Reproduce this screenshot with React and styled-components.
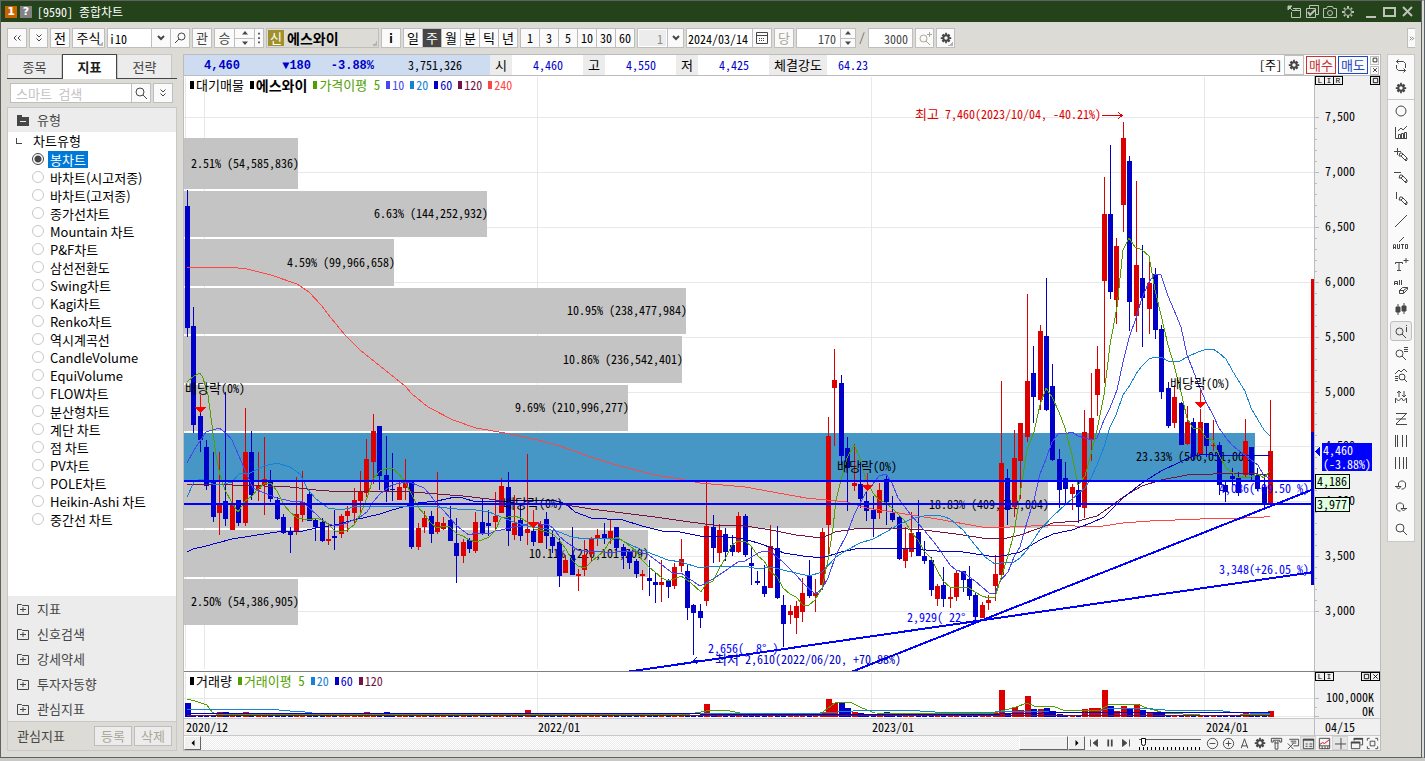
import React, { Component } from 'react';
import styled, { createGlobalStyle, css } from 'styled-components';

const cellFont = '"Noto Sans Mono CJK KR", "Noto Sans CJK KR", "Liberation Mono", monospace';
const treeFont = '"Noto Sans CJK KR", sans-serif';

const RED = '#dc0000';
const BLUE = '#0000c8';
const LINE = '#0000ff';
const GREEN = '#50a000';
const VIOLET = '#4646f5';
const SKY = '#1482d7';
const WINE = '#731446';
const CORAL = '#ff4646';

const GlobalStyle = createGlobalStyle`
  * { box-sizing: border-box; }
  body {
    margin: 0;
    background: #c8c8c6;
    font: 12px/16px ${cellFont};
    color: #000;
    overflow: hidden;
  }
  button, input, select { font: inherit; margin: 0; border-radius: 0; }
  button { cursor: pointer; }
  button svg { flex: none; }
`;

const Screen = styled.div`
  height: 100vh;
  min-height: 620px;
  padding-bottom: 3px;
`;

const Frame = styled.div`
  display: flex;
  flex-direction: column;
  height: 100%;
  border: 1px solid #5f625f;
  border-right: 4px double #5a6068;
  background: #dcdbd5;
`;

const TitleBar = styled.header`
  display: flex;
  align-items: center;
  flex: 0 0 21px;
  gap: 5px;
  padding: 0 5px 0 4px;
  background: #24431b;
  color: #fff;
`;

const TitleBadges = styled.div`
  display: flex;
  gap: 3px;
`;

const TitleBadge = styled.span`
  width: 12px;
  height: 12px;
  background: ${p => p.$color};
  font: bold 11px/12px "DejaVu Sans", sans-serif;
  text-align: center;
`;

const TitleText = styled.h1`
  flex: 1;
  margin: 0;
  font-size: 12px;
  font-weight: normal;
`;

const TitleTools = styled.div`
  display: flex;
`;

const TitleButton = styled.button`
  display: flex;
  align-items: center;
  justify-content: center;
  width: 18px;
  height: 18px;
  padding: 0;
  border: 0;
  background: none;
  color: #bcc4b8;
`;

const Toolbar = styled.div`
  display: flex;
  flex: 0 0 32px;
  gap: 2px;
  padding: 6px 6px 6px;
`;

const Group = styled.div`
  display: flex;
  height: 20px;
  & > * + * { margin-left: -1px; }
`;

const ToolButton = styled.button`
  display: flex;
  align-items: center;
  justify-content: center;
  flex: 0 0 ${p => p.$w || 20}px;
  min-width: 0;
  height: 20px;
  padding: 0;
  border: 1px solid #bebebe;
  background: ${p => (p.$on ? '#464646' : '#fafafa')};
  color: ${p => (p.$on ? '#fff' : p.$dim ? '#aaa696' : p.$soft ? '#464646' : '#000')};
  font-size: ${p => (p.$ko ? 13 : 12)}px;
  ${p => p.$corner && css`
    background: linear-gradient(135deg, transparent 50%, #b4b4b4 50%) right 1px bottom 1px / 5px 5px no-repeat #fafafa;
  `}
`;

const StockButton = styled(ToolButton)`
  justify-content: flex-start;
  gap: 3px;
  padding-left: 1px;
  background-color: #dcdbd5;
  font-weight: bold;
  font-size: 14px;
`;

const StockBadge = styled.span`
  width: 16px;
  line-height: 16px;
  background: #a0912d;
  color: #fff;
  font-size: 13px;
  font-weight: normal;
  text-align: center;
`;

const Field = styled.input`
  width: ${p => p.$w}px;
  height: 20px;
  padding: 0 ${p => (p.$right ? 4 : 1)}px;
  border: 1px solid #bebebe;
  background: ${p => (p.$gray ? '#ececec' : '#fff')};
  box-shadow: ${p => (p.$gray ? 'inset 0 0 0 1px #fff' : 'none')};
  color: ${p => (p.$gray ? '#8c8c8c' : p.$soft ? '#464646' : '#000')};
  text-align: ${p => (p.$right ? 'right' : 'left')};
  outline: none;
`;

const Spinner = styled.div`
  display: flex;
  flex-direction: column;
  flex: none;
  width: ${p => p.$w}px;
  height: 20px;
  border: 1px solid #bebebe;
  background: #fafafa;
`;

const SpinButton = styled.button`
  flex: 1;
  display: flex;
  align-items: center;
  justify-content: center;
  min-height: 0;
  padding: 0;
  border: 0;
  background: none;
  color: #464646;
  & + & { border-top: 1px solid #bebebe; }
`;

const Slash = styled.span`
  width: 8px;
  line-height: 18px;
  text-align: center;
  color: #666;
`;

const EdgeButton = styled(ToolButton)`
  margin-left: auto;
  border-right: 0;
`;

const Main = styled.div`
  display: flex;
  flex: 1;
  gap: 6px;
  min-height: 0;
  padding: 0 6px 6px;
`;

const Sidebar = styled.aside`
  display: flex;
  flex-direction: column;
  flex: 0 0 170px;
  color: #464646;
  font-size: 13px;
`;

const Tabs = styled.div`
  display: flex;
  height: 25px;
  padding-right: 5px;
  border-bottom: 1px solid #464646;
`;

const Tab = styled.button`
  flex: 1;
  height: ${p => (p.$active ? 25 : 24)}px;
  padding: 0;
  border: 1px solid ${p => (p.$active ? '#464646' : '#c8c8c8')};
  border-bottom: 0;
  background: ${p => (p.$active ? '#fff' : '#ececec')};
  color: ${p => (p.$active ? '#1e1e1e' : '#464646')};
  font-weight: ${p => (p.$active ? 'bold' : 'normal')};
`;

const SearchRow = styled.div`
  display: flex;
  gap: 2px;
  padding: 4px 3px;
  & input { padding-left: 5px; }
  & input::placeholder { color: #c3c3c3; opacity: 1; }
`;

const Panel = styled.div`
  display: flex;
  flex-direction: column;
  flex: 1;
  min-height: 0;
  border: 1px solid #c8c8c8;
  background: #fff;
`;

const GroupHeader = styled.button`
  display: flex;
  align-items: center;
  gap: 6px;
  flex: 0 0 ${p => p.$h}px;
  width: 100%;
  padding: 0 7px;
  border: 0;
  background: #ececec;
  color: #464646;
`;

const Tree = styled.div`
  flex: 1;
  min-height: 0;
  overflow: hidden;
  font: 13px/18px ${treeFont};
  color: #000;
`;

const TreeRoot = styled.div`
  display: flex;
  align-items: center;
  gap: 11px;
  height: 18px;
  padding-left: 8px;
  &::before {
    content: '';
    width: 5px;
    height: 5px;
    border: 1px solid #464646;
    border-width: 0 0 1px 1px;
  }
`;

const TreeItem = styled.label`
  display: flex;
  align-items: center;
  gap: 4px;
  height: 18px;
  padding-left: 24px;
  & span {
    padding: 0 2px;
    line-height: 17px;
  }
  & input:checked + span {
    background: #0078d7;
    color: #fff;
  }
`;

const Radio = styled.input`
  appearance: none;
  width: 12px;
  height: 12px;
  border: 1px solid #c8c8c8;
  border-radius: 50%;
  background: #fff;
  &:checked {
    border-color: #464646;
    background: radial-gradient(circle, #464646 3px, #fff 4px);
  }
`;

const SideFooter = styled.div`
  display: flex;
  align-items: center;
  gap: 2px;
  flex: 0 0 29px;
  padding: 0 4px 0 9px;
  border-top: 1px solid #c8c8c8;
  background: #dcdbd5;
  & > span { flex: 1; }
`;

const SideButton = styled(ToolButton)`
  background: #ececec;
`;

const ChartPanel = styled.main`
  display: flex;
  flex-direction: column;
  flex: 1;
  min-width: 0;
  border: 1px solid #bcbcbe;
  background: #fff;
`;

const QuoteBar = styled.div`
  display: flex;
  align-items: center;
  flex: 0 0 21px;
  padding-right: 1px;
  border-bottom: 1px solid #bcbcbe;
  line-height: 20px;
`;

const QuoteMain = styled.div`
  display: flex;
  flex: 0 0 306px;
  height: 20px;
  background: #cddcf0;
`;

const Quote = styled.span`
  flex: 0 0 ${p => p.$w}px;
  padding-right: ${p => p.$pad || 0}px;
  color: ${p => (p.$plain ? '#000' : BLUE)};
  text-align: right;
  ${p => p.$bold && css`font: bold 12px/22px "Liberation Mono", "Noto Sans CJK KR", monospace;`}
`;

const QuoteLabel = styled.span`
  flex: 0 0 ${p => p.$w || 22}px;
  background: #ececec;
  font-size: 13px;
  text-align: center;
`;

const QuoteTools = styled.div`
  display: flex;
  align-items: center;
  gap: 2px;
  margin-left: auto;
`;

const TradeButton = styled.button`
  width: 30px;
  height: 18px;
  padding: 0;
  border: 1px solid ${p => p.$color};
  background: #fafafa;
  color: ${p => p.$color};
  font-size: 13px;
  line-height: 14px;
`;

const MiniStack = styled.div`
  display: flex;
  flex-direction: column;
  gap: 1px;
`;

const MiniButton = styled.button`
  display: flex;
  align-items: center;
  justify-content: center;
  width: ${p => (p.$dark ? 10 : 9)}px;
  height: 9px;
  padding: 0;
  border: 1px solid ${p => (p.$dark ? '#000' : '#bebebe')};
  background: ${p => (p.$dark ? 'none' : '#fafafa')};
  color: #000;
  font: 8px/8px "Liberation Mono", monospace;
`;

const ChartRow = styled.div`
  display: flex;
  position: relative;
  min-height: 0;
  flex: ${p => (p.$h ? `0 0 ${p.$h}px` : '1')};
  border-top: ${p => (p.$h ? '1px solid #808080' : '0')};
`;

const Plot = styled.svg`
  display: block;
  flex: 1;
  min-width: 0;
  height: 100%;
  font: 12px ${cellFont};
`;

const Axis = styled.div`
  position: relative;
  flex: 0 0 66px;
  border-left: 1px solid #bcbcbe;
  background: #f0f0f0;
  & > svg {
    display: block;
    width: 100%;
    height: 100%;
    font: 12px ${cellFont};
  }
`;

const AxisTools = styled.div`
  position: absolute;
  top: 0;
  left: 0;
  right: 0;
  display: flex;
  & > button + button { margin-left: -1px; }
`;

const Push = styled.span`
  flex: 1;
`;

const Legend = styled.div`
  position: absolute;
  top: 1px;
  left: 6px;
  display: flex;
  gap: 6px;
`;

const LegendItem = styled.span`
  display: flex;
  align-items: center;
  gap: 2px;
  color: ${p => p.$color};
  font-weight: ${p => (p.$bold ? 'bold' : 'normal')};
  font-size: ${p => (p.$bold ? 14 : p.$ko ? 13 : 12)}px;
  white-space: pre;
  &::before {
    content: '';
    width: 4px;
    height: 8px;
    background: ${p => p.$color};
  }
`;

const DateRow = styled.div`
  display: flex;
  flex: 0 0 17px;
  border-top: 1px solid #c8c8c8;
  background: #f0f0f0;
`;

const Dates = styled.div`
  display: grid;
  grid-template-columns: 352fr 334fr 334fr 108fr;
  flex: 1;
  padding-left: 2px;
`;

const DateCorner = styled.div`
  flex: 0 0 66px;
  padding-left: 10px;
  border-left: 1px solid #bcbcbe;
`;

const ControlRow = styled.div`
  display: flex;
  flex: 0 0 15px;
  border-top: 1px solid #c8c8c8;
  background: #f5f5f5;
`;

const ScrollTrack = styled.div`
  display: flex;
  flex: 1;
  height: 14px;
  background: repeating-conic-gradient(#ececec 0 25%, #fff 0 50%) 0 0 / 2px 2px;
`;

const ScrollPiece = styled.button`
  display: flex;
  align-items: center;
  justify-content: center;
  width: ${p => p.$w}px;
  height: 14px;
  padding: 0;
  border: 1px solid;
  border-color: #fff #646464 #646464 #fff;
  background: #f0f0f0;
  color: #000;
`;

const ControlTools = styled.div`
  display: flex;
  align-items: center;
  flex: 0 0 295px;
  height: 14px;
  padding-left: 1px;
`;

const ControlButton = styled.button`
  display: flex;
  align-items: center;
  justify-content: center;
  flex: 0 0 16px;
  height: 14px;
  padding: 0;
  border: 0;
  background: ${p => (p.$on ? '#e6e6e6' : 'none')};
  box-shadow: ${p => (p.$on ? 'inset 0 0 0 1px #d2d2d2' : 'none')};
  color: #464646;
`;

const ZoomSlider = styled.input`
  appearance: none;
  flex: none;
  width: 62px;
  height: 14px;
  &[type] { margin: 0 3px 0 5px; }
  background:
    linear-gradient(#646464, #646464) 0 3px / 62px 1px no-repeat,
    repeating-linear-gradient(90deg, #000 0 1px, transparent 1px 4px) 0 11px / 62px 3px no-repeat;
  &::-webkit-slider-thumb {
    appearance: none;
    width: 5px;
    height: 8px;
    margin-top: -3px;
    border: 1px solid #000;
    border-radius: 0 0 3px 3px;
    background: #fff;
  }
`;

const ToolStrip = styled.nav`
  align-self: flex-start;
  flex: 0 0 28px;
  padding: 1px 0 0;
  border: 1px solid #c8c8c8;
  background: #fafafa;
`;

const StripButton = styled.button`
  display: flex;
  align-items: center;
  justify-content: center;
  width: 22px;
  height: 20px;
  padding: 0;
  border: 1px solid ${p => (p.$on ? '#bebebe' : 'transparent')};
  border-radius: 3px;
  background: ${p => (p.$on ? '#ececec' : 'none')};
  color: #464646;
  ${ToolStrip} & { margin: 0 2px 2px; }
`;

const StripRule = styled.hr`
  height: 1px;
  margin: -1px 0 1px;
  border: 0;
  background: #c8c8c8;
`;

const gearPath = 'M7 2h2v2h1l1-1 2 2-1 1v1h2v2h-2v1l1 1-2 2-1-1H9v2H7v-2H6l-1 1-2-2 1-1V9H2V7h2V6L3 5l2-2 1 1h1z';

const pencil = <path d="M7 6l2 0 5 5v2l-1 1-5-5-2 0zM8 9l2-2M12 13l2-2" />;
const lens = <><circle cx="6.5" cy="8.5" r="3.5" /><path d="M9 11l4 4" /></>;

const shapes = {
  dblLeft: <path d="M7.5 5.5L5 8l2.5 2.5M11.500 5.500L9 8l2.500 2.500" />,
  dblRight: <path d="M4 4l4 4-4 4M9 4l4 4-4 4" />,
  dblDown: <path d="M5.500 4.500L8 7l2.500-2.500M5.500 8.500L8 11l2.500-2.500" />,
  chevron: <path d="M5 6l3 3 3-3" strokeWidth="2" />,
  up: <path d="M2 11h12L8 4z" fill="currentColor" stroke="none" />,
  down: <path d="M2 5h12l-6 7z" fill="currentColor" stroke="none" />,
  left: <path d="M10 4v8L6 8z" fill="currentColor" stroke="none" />,
  right: <path d="M6 4v8l4-4z" fill="currentColor" stroke="none" />,
  dots: <path d="M7 2h2v2H7zM7 7h2v2H7zM7 12h2v2H7z" fill="currentColor" stroke="none" />,
  findLeft: <><circle cx="9.5" cy="6.5" r="3.5" /><path d="M7 9l-4 4" /></>,
  find: <><circle cx="7" cy="7" r="4" /><path d="M10 10l4 4" /></>,
  findPlus: <>{lens}<path d="M12.5 2v5M10 4.5h5" /></>,
  findInfo: <>{lens}<path d="M13.5 2v1M13.5 4v5" /></>,
  findList: <>{lens}<path d="M11 2.5h4M11 4.500h4M11 6.500h4" /></>,
  findChart: <><path d="M2 7l4-4 2 2 3-3 3 3M2 9.500h3M2 11.500h3M2 13.500h3" /><circle cx="9" cy="10" r="3" /><path d="M11 12l3 3" /></>,
  calendar: <><path d="M2.500 2.500h11v11h-11zM3 5.500h10" /><path d="M5 8.500h6M5 10.500h6" strokeDasharray="1 1" /></>,
  gear: <><path d={gearPath} fill="currentColor" stroke="none" /><circle cx="8" cy="8" r="2" fill="#fafafa" stroke="none" /></>,
  gearLine: <><circle cx="8" cy="8" r="3.5" /><path d="M8 2v2M8 12v2M2 8h2M12 8h2M4 4l1 1M11 11l1 1M12 4l-1 1M5 11l-1 1" strokeWidth="2" /></>,
  popOut: <><path d="M7 4.500h7.500v9h-9V8M6 6.500h8M10 5v2" /><path d="M2 2h4L2 6zM3 3l4 4" fill="currentColor" /></>,
  windows: <><path d="M5.500 4V1.500h9v9H12M2.500 4.500h9v9h-9z" /><path d="M4 8l2 3 5-5" strokeWidth="2" /></>,
  camera: <><path d="M1.500 4.500h3l1-2h5l1 2h3v9h-13z" /><circle cx="8" cy="9" r="2.5" /></>,
  minimize: <path d="M3 13h10" strokeWidth="2" />,
  maximize: <path d="M3 4h11v8H3z" strokeWidth="2" />,
  close: <path d="M4 3l9 9M13 3l-9 9" strokeWidth="2" />,
  folder: <path d="M2 3h5v2h7v9H2z M5 9h6v1H5z" fill="currentColor" stroke="none" fillRule="evenodd" />,
  folderPlus: <path d="M2.500 3.500h4l1 1h6v9h-11zM5 8.500h6M8 6v5" />,
  refresh: <path d="M5.500 1.500l-2 2 2 2M3.500 3.500h7l2 2V10M10.500 14.500l2-2-2-2M12.500 12.500h-7l-2-2V7" />,
  circle: <circle cx="8" cy="8" r="5" />,
  chartBars: <path d="M2.500 2v11.500H14M5 6l3-3 2 2 4-4M5.500 13V9.500h2V13M8.500 13V8.500h2V13M11.500 13V7.500h2V13" />,
  crossPencil: <>{pencil}<path d="M1 4.500h7M4.500 1v7" /></>,
  dashPencil: <>{pencil}<path d="M1 3.500h7" /></>,
  barPencil: <>{pencil}<path d="M3.500 1v7" /></>,
  slash: <path d="M2 14L14 2" />,
  autoLine: <><path d="M6 7l5-5" /><path d="M.5 14v-4l1-1 1 1v4M1 12.500h2M4.500 9v4.500h2V9M8 9.500h3M9.500 9v5M12.500 9.500h2v4h-2z" /></>,
  textPlus: <path d="M2.500 7V5.500h7V7M6 5v8.500M4 13.500h4M13 1v5M10.500 3.500h5" />,
  allErase: <path d="M1.500 6V2.500h3V6M2 4.500h3M6.500 1v5M8.500 1v5M6.500 11.500l3-3h5v2l-4 4h-4zM6 11.500h4.500l4-3M10.500 11v3" />,
  candles: <><path d="M5 3v11M11 2v11" /><path d="M3 6h4v5H3zM9 5h4v5H9z" fill="currentColor" /></>,
  waveArrows: <path d="M2.500 14V9l3 3 3-3 2 3 3-3v5M6 8V2M4 4l2-2 2 2M11 2v6M9 6l2 2 2-2" />,
  zigzag: <path d="M3 2.500h11M13 3L3 13M3 8h10M3 13.500h11" />,
  bars5: <path d="M2.500 2v12M4.500 2v12M9.500 2v12M13.500 2v12" />,
  bars4: <path d="M2.500 2v12M6.500 2v12M10.500 2v12M13.500 2v12" />,
  turnLeft: <path d="M5.500 10V6l2-2h3l2 2v4l-2 2h-2M2 9.500h6M5.500 12L3 9.500h5z" />,
  turnRight: <path d="M10.500 10V6l-2-2h-3l-2 2v4l2 2h2M8 9.500h6M10.500 12L8 9.500h5z" />,
  first: <><path d="M4 4v8" /><path d="M12 4v8L7 8z" fill="currentColor" /></>,
  pause: <path d="M6 4v8M10 4v8" strokeWidth="2" />,
  last: <><path d="M12 4v8" /><path d="M4 4v8l5-4z" fill="currentColor" /></>,
  minus: <><circle cx="8" cy="8" r="5.5" /><path d="M5 8h6" /></>,
  plus: <><circle cx="8" cy="8" r="5.5" /><path d="M5 8h6M8 5v6" /></>,
  letter: <path d="M4.500 13L8 3l3.500 10M5 10.500h6" />,
  funnel: <path d="M2.500 2.500h11v4h-2v-2h-7v2h-2zM6 7.500h4M6.500 5v9h3V5" />,
  flagX: <path d="M4.500 3.500h10v7H9M6 5.500h6M7 7.500h5M3 8l6 6M9 8l-6 6" />,
  tableGrid: <><path d="M2.500 3.500h11v10h-11zM5 8.500h2M9 8.500h3M5 11h2M9 11h3" /><path d="M2 4h12" strokeWidth="2" /></>,
  chartRed: <><path d="M2.500 2.500h11v11h-11zM2 10.500h12M5.500 11v3M8.500 11v3M11.500 11v3" /><path d="M3 9l3-2 2 1 5-4" stroke={RED} /></>,
  cross: <path d="M2 8.500h12M8.500 2v12" />,
  layers: <><path d="M5.500 5V2.500h9v7H12M2.500 6.500h9v7h-9z" /><path d="M2 7h10M5 3h10" strokeWidth="2" /></>,
  expand: <path d="M2.500 5V2.500H5M11 2.500h2.500V5M13.500 11v2.500H11M5 13.500H2.500V11M5.500 5.500h5v5h-5z" />,
  square: <path d="M3 3h10v10H3z" strokeWidth="2" />,
  x: <path d="M3 3l10 10M13 3L3 13" strokeWidth="2" />,
};

const Icon = ({ name, size = 16 }) => (
  <svg width={size} height={size} viewBox="0 0 16 16" fill="none" stroke="currentColor" aria-hidden="true">
    {shapes[name]}
  </svg>
);

// one row per week: direction, high, body top, body bottom, low
const candles = `b 190 206 328 337|b 307 326 425 433|b 413 416 440 452|b 440 447 486 490|b 452 482 517 522|r 452 505 513 535
b 392 501 519 526|r 482 505 530 530|b 500 500 523 526|r 408 452 523 526|b 431 452 495 500|r 452 486 489 501|r 437 479 485 515
b 470 482 499 502|b 497 500 519 520|b 514 517 533 534|b 527 531 535 553|r 477 514 532 535|r 471 502 515 522|b 490 494 521 521
b 518 520 527 541|b 518 522 541 542|r 523 539 541 545|b 510 536 538 550|r 514 516 534 538|r 506 511 516 532|r 488 500 513 524
r 471 492 501 515|r 439 459 493 497|r 414 431 462 484|b 426 426 476 490|b 436 475 491 502|b 453 489 490 501|r 482 487 500 500
r 459 482 488 500|b 481 481 547 549|r 523 528 547 550|r 511 518 527 533|b 511 516 534 543|r 472 522 532 534|r 517 523 529 530
b 506 520 541 541|b 518 543 556 583|r 539 542 556 563|b 538 540 549 553|r 512 522 551 553|b 499 522 534 535|b 510 523 526 536
r 492 516 522 531|r 478 486 513 513|b 472 487 531 546|r 495 523 535 540|b 505 520 536 541|r 454 529 533 545|b 527 531 542 546
r 521 524 543 543|b 512 519 536 549|b 531 537 546 553|b 538 542 576 587|r 555 560 573 573|b 527 555 575 575|r 569 574 576 591
r 540 555 570 576|r 537 539 554 561|r 529 535 539 546|b 523 534 538 544|r 520 531 538 544|b 527 527 548 552|b 544 547 556 569
b 549 551 563 569|b 559 561 574 578|r 570 574 576 590|b 560 578 581 596|b 573 582 585 603|r 560 582 585 602|b 579 581 587 598
r 563 567 586 589|r 539 559 566 572|b 565 571 608 620|b 604 605 613 655|b 604 611 618 628|r 482 526 601 606|b 515 527 548 563
r 524 530 553 562|b 528 534 552 561|b 535 545 552 556|r 512 516 552 553|b 514 516 555 557|b 546 563 566 585|b 571 581 583 585
b 565 586 594 597|r 525 546 588 588|b 526 548 598 599|b 595 605 624 647|r 605 611 615 624|r 601 606 618 634|r 578 593 612 622
b 560 576 596 598|r 579 593 596 612|r 528 532 585 590|r 417 436 525 555|r 349 380 388 446|b 375 383 456 465|b 437 448 468 511
r 444 483 486 491|b 458 484 499 508|b 492 501 511 521|b 496 510 519 537|r 483 490 513 519|b 474 479 502 525|b 496 513 520 522
b 515 517 559 560|r 527 548 561 568|r 512 533 552 557|b 500 532 556 556|b 541 556 561 564|b 557 560 590 596|r 584 586 599 606
b 567 585 599 607|r 587 597 599 608|r 570 573 597 601|b 571 571 580 592|b 566 579 596 600|b 593 595 617 620|r 602 605 618 618
r 595 600 603 610|r 555 574 586 601|r 381 463 575 580|b 469 478 510 525|r 430 458 507 517|r 423 423 461 499|r 294 381 437 442
b 346 373 397 423|r 325 331 400 410|b 278 336 410 411|b 364 386 460 461|b 449 459 490 508|b 462 478 489 505|r 484 487 494 510
b 482 490 507 523|r 410 432 508 518|r 373 418 440 461|r 346 369 395 416|r 177 214 281 383|b 145 214 292 299|r 238 246 300 324
r 122 138 205 232|b 156 161 302 331|r 181 265 316 332|b 245 278 298 347|r 261 283 309 334|b 268 274 330 339|b 325 329 392 399
b 382 388 426 428|r 385 397 423 428|b 402 403 445 445|r 406 422 444 445|b 418 422 456 461|r 409 422 454 454|b 423 423 446 457
r 420 445 446 451|b 442 445 485 495|b 480 485 492 502|b 468 476 479 485|b 472 478 493 496|r 419 441 475 477|b 447 447 475 480
b 468 475 489 491|b 475 487 505 508|r 400 451 504 504`
  .split(/[|\n]/)
  .map((row, i) => {
    const [dir, ...v] = row.split(' ');
    const [high, top, bottom, low] = v.map(Number);
    return { x: Math.round(187 + i * 6.41), color: dir === 'r' ? RED : BLUE, high, top, bottom, low };
  });

// bar heights of the busy weeks, every other week is nearly flat
const volumes = {
  0: 14, 5: 5, 6: 5, 9: 5, 28: 5, 31: 5, 53: 7, 81: 13, 82: 4, 86: 4, 99: 5, 100: 18, 101: 14, 102: 14, 103: 9, 104: 5,
  105: 4, 108: 4, 109: 5, 126: 4, 127: 27, 128: 4, 129: 10, 130: 7, 131: 21, 132: 8, 133: 8, 134: 9, 135: 6, 136: 3, 140: 8,
  141: 9, 142: 9, 143: 27, 144: 11, 145: 6, 146: 11, 147: 8, 148: 13, 149: 7, 150: 4, 151: 4, 152: 4, 165: 4, 169: 6,
};

const averages = [
  [CORAL, '187,267 229,267 247,269 271,275 297,284 309,292 322,306 331,318 345,335 360,350 375,362 390,374 405,386 412,394 428,407 453,420 476,428 505,433 534,439 560,446 585,455 616,465 655,475 680,479 700,483 745,487 806,498 847,502 867,508 886,511 937,519 982,527 1010,527 1053,525 1097,527 1123,523 1150,521 1200,519 1245,518 1264,517 1270,516'],
  [WINE, '187,485 206,484 232,485 264,486 290,487 316,490 341,492 367,491 412,492 437,494 463,496 489,499 514,503 540,503 566,505 591,509 623,513 655,517 690,522 713,525 745,526 771,530 796,535 822,538 835,532 854,529 892,528 924,530 956,534 989,539 1007,538 1020,535 1040,528 1053,523 1078,521 1097,516 1110,507 1123,497 1142,486 1161,480 1187,475 1213,474 1238,473 1258,474 1270,474'],
  [BLUE, '187,552 193,549 206,546 232,539 251,536 277,532 303,531 316,528 335,525 354,520 380,514 392,510 418,503 437,501 455,497 463,498 476,502 489,501 508,501 527,500 553,500 566,504 575,512 591,518 623,520 642,526 662,531 680,532 700,536 726,537 745,539 764,545 784,553 803,556 822,558 841,552 860,548 905,548 937,551 963,552 989,556 995,557 1007,555 1020,552 1040,540 1053,534 1072,530 1091,523 1104,517 1123,498 1142,483 1161,471 1180,462 1193,456 1206,454 1219,456 1240,455 1255,456 1270,455'],
  [SKY, '187,497 194,482 200,479 207,481 213,484 220,485 232,482 239,474 250,473 264,466 277,463 290,467 300,474 307,488 315,498 328,508 341,510 354,507 373,506 392,506 418,506 437,507 457,509 476,510 489,512 501,517 514,522 527,526 547,529 559,532 572,537 585,539 604,538 617,538 629,544 642,550 655,555 668,560 681,562 700,568 713,566 726,567 745,566 758,569 771,567 783,570 796,573 809,576 822,572 836,557 847,550 860,543 873,539 886,532 898,525 911,519 924,516 937,515 945,517 950,519 963,530 975,545 985,557 995,564 1008,562 1014,562 1020,558 1027,550 1040,530 1053,516 1066,504 1078,494 1085,488 1091,478 1097,465 1104,447 1110,427 1116,415 1123,395 1130,385 1136,374 1142,366 1149,359 1155,357 1161,357 1168,361 1180,361 1187,357 1198,352 1207,349 1213,349 1219,353 1226,359 1232,370 1238,380 1245,391 1251,408 1258,420 1264,430 1270,436'],
  [VIOLET, '187,463 194,450 206,432 219,428 226,433 232,440 239,456 247,475 253,488 264,493 277,498 290,501 303,502 309,508 316,514 322,520 329,524 335,526 347,523 360,517 367,512 373,502 380,494 392,485 405,482 412,483 424,488 431,496 437,504 444,511 450,518 457,526 469,535 476,533 489,534 495,531 501,530 514,527 521,526 534,522 540,524 547,524 553,528 559,536 566,542 578,550 585,551 598,551 610,553 623,551 636,551 649,555 662,565 674,574 681,573 700,586 713,579 725,571 738,562 745,561 758,553 764,551 771,552 783,562 796,575 803,583 815,594 822,589 828,578 836,555 847,534 854,515 866,492 873,484 879,476 886,474 892,483 898,498 911,515 924,530 937,546 950,565 956,570 963,572 975,581 989,593 995,593 1001,580 1008,572 1014,557 1020,547 1027,522 1034,500 1040,474 1046,459 1052,442 1059,433 1065,434 1072,432 1078,436 1085,438 1091,440 1097,438 1104,420 1110,408 1117,390 1123,362 1129,338 1136,318 1142,298 1149,282 1155,274 1161,275 1168,296 1174,310 1181,327 1187,355 1193,370 1200,388 1206,402 1213,415 1219,428 1226,438 1232,445 1238,450 1245,455 1251,460 1258,465 1264,476 1270,478'],
  [GREEN, '187,382 194,376 200,373 203,378 208,395 212,425 216,455 220,475 225,490 232,503 238,512 245,501 252,496 258,489 264,484 271,483 277,491 284,505 290,512 297,518 309,520 316,518 322,520 328,524 335,531 341,532 347,530 354,525 360,515 367,498 373,479 380,471 386,469 392,468 399,474 405,482 412,495 418,507 425,515 431,523 437,528 444,526 450,527 457,534 463,536 469,540 476,542 482,540 489,537 495,531 501,518 508,517 514,516 521,518 527,522 534,529 540,530 547,532 553,534 559,540 566,549 572,560 578,566 585,568 591,562 598,556 604,551 610,541 617,537 623,541 630,546 636,551 642,560 649,567 655,572 662,578 668,581 674,579 681,576 690,582 701,592 706,584 713,581 719,569 725,559 732,545 738,541 745,541 751,546 758,556 764,561 771,572 777,577 783,588 790,594 796,597 803,605 809,605 815,600 822,588 828,560 833,528 836,500 841,480 847,458 854,445 860,458 866,480 873,493 879,500 886,503 892,508 898,514 905,521 911,532 918,540 924,551 931,558 937,570 943,581 950,587 956,588 963,587 969,588 975,592 982,596 989,598 995,597 1001,578 1008,556 1014,533 1020,495 1027,450 1034,432 1040,405 1046,388 1052,397 1059,412 1065,428 1072,455 1078,485 1085,476 1091,454 1097,430 1104,395 1110,345 1117,307 1123,250 1129,238 1135,247 1142,250 1149,256 1155,290 1161,315 1168,345 1174,365 1181,392 1187,418 1193,428 1200,428 1206,438 1213,440 1219,455 1226,468 1232,472 1238,478 1245,477 1251,477 1258,474 1264,478 1270,471'],
];

const volumeAverages = [
  [GREEN, '187,699 195,701 207,705 212,712 216,714 690,714 706,711 725,710 745,714 820,714 835,703 850,702 862,708 875,713 990,714 1005,710 1016,707 1027,703 1034,706 1052,706 1066,711 1100,710 1110,704 1136,704 1150,709 1165,713 1200,715 1240,715 1270,714'],
  [SKY, '187,709 268,709 290,711 305,712 312,713 820,713 870,710 905,710 950,713 995,712 1050,711 1100,711 1110,708 1140,708 1165,710 1215,710 1230,712 1270,714'],
  [WINE, '187,715 1270,715'],
  [BLUE, '187,713 560,713 700,714 1000,714 1085,712 1270,712'],
];

// share of volume traded inside each price band
const bands = [
  [138, 51, 298, '2.51% (54,585,836)'],
  [191, 46, 487, '6.63% (144,252,932)'],
  [239, 47, 394, '4.59% (99,966,658)'],
  [288, 46, 686, '10.95% (238,477,984)'],
  [336, 47, 682, '10.86% (236,542,401)'],
  [385, 46, 628, '9.69% (210,996,277)'],
  [433, 47, 1255, '23.33% (506,051,001)'],
  [482, 46, 1048, '18.83% (409,512,004)'],
  [530, 47, 648, '10.11% (220,101,209)'],
  [579, 46, 298, '2.50% (54,386,905)'],
];

const dividends = [[185, 389, 200, 413], [503, 504, 533, 528], [837, 467, 867, 491], [1170, 384, 1200, 408]];
const gridX = [185, 204, 537, 871, 1204];
const priceTicks = [7500, 7000, 6500, 6000, 5500, 5000, 4500, 4000, 3500, 3000].map((price, i) => ({
  label: price.toLocaleString('en-US'),
  y: 117 + Math.round(i * 54.9),
}));

const PriceChart = () => (
  <Plot viewBox="184 76 1130 595" shapeRendering="crispEdges">
    <g stroke="#e8e8e8">
      {gridX.map(x => <path key={x} d={`M${x}.5 77V669`} />)}
      {priceTicks.map(t => <path key={t.y} d={`M184 ${t.y}.5H1314`} />)}
    </g>
    {bands.map(([y, h, right]) => (
      <rect key={y} x="184" y={y} width={right - 184} height={h} fill={y === 433 ? '#4696c6' : '#c4c4c4'} />
    ))}
    {bands.map(([y, h, right, label]) => (
      <text key={y} x={right + 1} y={y + Math.round(h / 2) + 4} textAnchor="end">{label}</text>
    ))}
    {candles.map(c => (
      <g key={c.x} fill={c.color}>
        <rect x={c.x} y={c.high} width="1" height={c.low - c.high} />
        <rect x={c.x - 2} y={c.top} width="5" height={c.bottom - c.top} />
      </g>
    ))}
    {averages.map(([color, points]) => (
      <polyline key={color} points={points} fill="none" stroke={color} />
    ))}
    {dividends.map(([x, y, ax, ay]) => (
      <g key={x}>
        <text x={x} y={y + 4}><tspan fontSize="13">배당락</tspan>(0%)</text>
        <path d={`M${ax}.5 ${ay - 18}V${ay - 5}`} stroke="red" />
        <path d={`M${ax - 5} ${ay - 6}h11l-5 6h-1z`} fill="red" />
      </g>
    ))}
    <g stroke={LINE} strokeWidth="2">
      <path d="M184 481H1314M184 504H1314M626 672L1314 572M851 672L1314 489" />
    </g>
    <g fill={LINE}>
      <text x="708" y="653" xmlSpace="preserve">2,656(  8° )</text>
      <text x="907" y="622">2,929( 22° )</text>
      <text x="1309" y="493" textAnchor="end">4,086(+09.50 %)</text>
      <text x="1309" y="574" textAnchor="end">3,348(+26.05 %)</text>
    </g>
    <g fill={BLUE}>
      <text x="715" y="664"><tspan fontSize="13">최저</tspan> 2,610(2022/06/20, +70.88%)</text>
      <path d="M694 660.5h8M697 657l-3 3.5 3 3.5" fill="none" stroke={BLUE} />
    </g>
    <text x="915" y="119" fill={RED}><tspan fontSize="13">최고</tspan> 7,460(2023/10/04, -40.21%)</text>
    <path d="M1102 115.5h20M1118 112l4 3.5-4 3.5" fill="none" stroke={RED} />
    <rect x="1311" y="279" width="3" height="153" fill={RED} />
    <rect x="1311" y="432" width="3" height="153" fill={BLUE} />
  </Plot>
);

const minorTicks = Array.from({ length: 46 }, (_, i) => 117 + Math.round(i * 10.98));

const PriceAxis = () => (
  <svg viewBox="1315 76 65 595" shapeRendering="crispEdges">
    <g stroke="#bcbcbe">
      {minorTicks.map((y, i) => <path key={y} d={`M1315 ${y}.5h${i % 5 ? 2 : 4}`} />)}
    </g>
    {priceTicks.map(t => <text key={t.y} x="1325" y={t.y + 4}>{t.label}</text>)}
    <path d="M1315 451.5l5-5v10z" fill={LINE} />
    <rect x="1322" y="443" width="50" height="28" fill={LINE} />
    <text x="1323" y="455" fill="#fff">4,460</text>
    <text x="1323" y="469" fill="#fff">(-3.88%)</text>
    <g fill="#e1ffe1" stroke="#000">
      <rect x="1315.5" y="474.5" width="34" height="14" />
      <rect x="1315.5" y="497.5" width="34" height="14" />
    </g>
    <text x="1317" y="486">4,186</text>
    <text x="1317" y="509">3,977</text>
  </svg>
);

const VolumeChart = () => (
  <Plot viewBox="184 672 1130 46" shapeRendering="crispEdges">
    <g stroke="#e8e8e8">
      {gridX.map(x => <path key={x} d={`M${x}.5 673V717`} />)}
      <path d="M184 698.5H1314M184 716.5H1314" />
    </g>
    {candles.map((c, i) => {
      const h = volumes[i] || (i % 3 ? 2 : 1);
      return <rect key={c.x} x={c.x - 2} y={717 - h} width={h > 2 ? 6 : 5} height={h} fill={c.color} />;
    })}
    {volumeAverages.map(([color, points]) => (
      <polyline key={color} points={points} fill="none" stroke={color} />
    ))}
  </Plot>
);

const chartTypes = [
  '봉차트', '바차트(시고저종)', '바차트(고저종)', '종가선차트', 'Mountain 차트', 'P&F차트', '삼선전환도', 'Swing차트',
  'Kagi차트', 'Renko차트', '역시계곡선', 'CandleVolume', 'EquiVolume', 'FLOW차트', '분산형차트', '계단 차트', '점 차트',
  'PV차트', 'POLE차트', 'Heikin-Ashi 차트', '중간선 차트',
];
const groups = ['지표', '신호검색', '강세약세', '투자자동향', '관심지표'];
const periods = ['일', '주', '월', '분', '틱', '년'];
const minutes = ['1', '3', '5', '10', '30', '60'];
const windowTools = ['popOut', 'windows', 'camera', 'gearLine'];
const windowButtons = ['minimize', 'maximize', 'close'];
const stripTools = [
  'circle', 'chartBars', 'crossPencil', 'dashPencil', 'barPencil', 'slash', 'autoLine', 'textPlus', 'allErase', 'candles',
  'findInfo', 'findList', 'findChart', 'waveArrows', 'zigzag', 'bars5', 'bars4', 'turnLeft', 'turnRight', 'find',
];
const viewTools = ['minus', 'plus', 'letter', 'gear', 'funnel', 'flagX', 'tableGrid', 'chartRed', 'cross', 'layers', 'expand'];

class App extends Component {
  state = { type: '봉차트', period: '주', tab: '지표', tool: 'findInfo' }

  handleType = e => this.setState({ type: e.target.value });

  renderSpinner(w) {
    return (
      <Spinner $w={w}>
        <SpinButton aria-label="up"><Icon name="up" size={8} /></SpinButton>
        <SpinButton aria-label="down"><Icon name="down" size={8} /></SpinButton>
      </Spinner>
    );
  }

  renderToolbar() {
    const { period } = this.state;
    return (
      <Toolbar>
        <ToolButton $soft aria-label="previous"><Icon name="dblLeft" /></ToolButton>
        <ToolButton $w={19} $soft aria-label="more"><Icon name="dblDown" /></ToolButton>
        <ToolButton $ko>전</ToolButton>
        <ToolButton $w={33} $ko $corner>주식</ToolButton>
        <Group>
          <Field $w={45} defaultValue="i10" aria-label="code" />
          <ToolButton $soft aria-label="open list"><Icon name="chevron" /></ToolButton>
          <ToolButton $soft aria-label="find code"><Icon name="findLeft" /></ToolButton>
        </Group>
        <ToolButton $soft $ko>관</ToolButton>
        <Group>
          <ToolButton $w={21} $soft $ko>승</ToolButton>
          {this.renderSpinner(21)}
          <ToolButton $w={10} $soft aria-label="menu"><Icon name="dots" size={14} /></ToolButton>
        </Group>
        <StockButton $w={113} $corner><StockBadge>신</StockBadge>에스와이</StockButton>
        <ToolButton><b>i</b></ToolButton>
        <Group>
          {periods.map(p => (
            <ToolButton key={p} $ko $on={p === period} onClick={() => this.setState({ period: p })}>{p}</ToolButton>
          ))}
        </Group>
        <Group>
          {minutes.map(m => <ToolButton key={m}>{m}</ToolButton>)}
        </Group>
        <Group>
          <Field $w={31} $right $gray defaultValue="1" aria-label="unit" />
          <ToolButton $w={17} $soft aria-label="units"><Icon name="chevron" /></ToolButton>
        </Group>
        <Group>
          <Field $w={67} defaultValue="2024/03/14" aria-label="date" />
          <ToolButton $soft aria-label="calendar"><Icon name="calendar" /></ToolButton>
        </Group>
        <ToolButton $dim $ko>당</ToolButton>
        <Group>
          <Field $w={45} $right $soft defaultValue="170" aria-label="bars" />
          {this.renderSpinner(16)}
        </Group>
        <Slash>/</Slash>
        <Field $w={45} $right $soft defaultValue="3000" aria-label="total" />
        <ToolButton $w={19} $dim aria-label="zoom in"><Icon name="findPlus" /></ToolButton>
        <ToolButton $w={19} $soft $corner aria-label="settings"><Icon name="gear" size={14} /></ToolButton>
        <EdgeButton $w={8} aria-label="next"><Icon name="dblRight" size={7} /></EdgeButton>
      </Toolbar>
    );
  }

  renderSidebar() {
    const { type, tab } = this.state;
    return (
      <Sidebar>
        <Tabs>
          {['종목', '지표', '전략'].map(t => (
            <Tab key={t} $active={t === tab} onClick={() => this.setState({ tab: t })}>{t}</Tab>
          ))}
        </Tabs>
        <SearchRow>
          <Group>
            <Field $w={122} placeholder="스마트 검색" aria-label="스마트 검색" />
            <ToolButton $soft aria-label="search"><Icon name="find" /></ToolButton>
          </Group>
          <ToolButton $soft aria-label="expand"><Icon name="dblDown" /></ToolButton>
        </SearchRow>
        <Panel>
          <GroupHeader $h={24}><Icon name="folder" />유형</GroupHeader>
          <Tree>
            <TreeRoot>차트유형</TreeRoot>
            {chartTypes.map(name => (
              <TreeItem key={name}>
                <Radio type="radio" name="chart-type" value={name} checked={name === type} onChange={this.handleType} />
                <span>{name}</span>
              </TreeItem>
            ))}
          </Tree>
          {groups.map(name => (
            <GroupHeader key={name} $h={25}><Icon name="folderPlus" />{name}</GroupHeader>
          ))}
          <SideFooter>
            <span>관심지표</span>
            <SideButton $w={38} $dim $ko>등록</SideButton>
            <SideButton $w={38} $dim $ko>삭제</SideButton>
          </SideFooter>
        </Panel>
      </Sidebar>
    );
  }

  renderQuote() {
    return (
      <QuoteBar>
        <QuoteMain>
          <Quote $w={56} $bold>4,460</Quote>
          <Quote $w={71} $bold>▼180</Quote>
          <Quote $w={63} $bold>-3.88%</Quote>
          <Quote $w={88} $plain>3,751,326</Quote>
        </QuoteMain>
        <QuoteLabel>시</QuoteLabel><Quote $w={71} $pad={20}>4,460</Quote>
        <QuoteLabel>고</QuoteLabel><Quote $w={71} $pad={20}>4,550</Quote>
        <QuoteLabel>저</QuoteLabel><Quote $w={71} $pad={20}>4,425</Quote>
        <QuoteLabel $w={58}>체결강도</QuoteLabel><Quote $w={41}>64.23</Quote>
        <QuoteTools>
          <span>[주]</span>
          <ToolButton $soft aria-label="chart settings"><Icon name="gear" size={14} /></ToolButton>
          <TradeButton $color="#c83232">매수</TradeButton>
          <TradeButton $color="#1e46c8">매도</TradeButton>
          <MiniStack>
            <MiniButton aria-label="restore"><Icon name="square" size={6} /></MiniButton>
            <MiniButton aria-label="remove"><Icon name="x" size={6} /></MiniButton>
          </MiniStack>
        </QuoteTools>
      </QuoteBar>
    );
  }

  render() {
    const { tool } = this.state;
    return (
      <Screen>
        <GlobalStyle />
        <Frame>
          <TitleBar>
            <TitleBadges>
              <TitleBadge $color="#c86400">1</TitleBadge>
              <TitleBadge $color="#828282">?</TitleBadge>
            </TitleBadges>
            <TitleText>[9590] 종합차트</TitleText>
            <TitleTools>
              {windowTools.map(name => <TitleButton key={name} aria-label={name}><Icon name={name} /></TitleButton>)}
            </TitleTools>
            <TitleTools>
              {windowButtons.map(name => <TitleButton key={name} aria-label={name}><Icon name={name} /></TitleButton>)}
            </TitleTools>
          </TitleBar>
          {this.renderToolbar()}
          <Main>
            {this.renderSidebar()}
            <ChartPanel>
              {this.renderQuote()}
              <ChartRow>
                <PriceChart />
                <Legend>
                  <LegendItem $color="#000" $ko>대기매물</LegendItem>
                  <LegendItem $color="#000" $bold>에스와이</LegendItem>
                  <LegendItem $color={GREEN} $ko>가격이평 5</LegendItem>
                  <LegendItem $color={VIOLET}>10</LegendItem>
                  <LegendItem $color={SKY}>20</LegendItem>
                  <LegendItem $color={BLUE}>60</LegendItem>
                  <LegendItem $color={WINE}>120</LegendItem>
                  <LegendItem $color={CORAL}>240</LegendItem>
                </Legend>
                <Axis>
                  <PriceAxis />
                  <AxisTools>
                    <MiniButton $dark>L</MiniButton>
                    <MiniButton $dark>I</MiniButton>
                    <MiniButton $dark>R</MiniButton>
                    <Push />
                    <MiniButton $dark aria-label="maximize pane"><Icon name="square" size={7} /></MiniButton>
                  </AxisTools>
                </Axis>
              </ChartRow>
              <ChartRow $h={47}>
                <VolumeChart />
                <Legend>
                  <LegendItem $color="#000" $ko>거래량</LegendItem>
                  <LegendItem $color={GREEN} $ko>거래이평 5</LegendItem>
                  <LegendItem $color={SKY}>20</LegendItem>
                  <LegendItem $color={BLUE}>60</LegendItem>
                  <LegendItem $color={WINE}>120</LegendItem>
                </Legend>
                <Axis>
                  <svg viewBox="1315 672 65 46" shapeRendering="crispEdges">
                    <path d="M1315 698.5h4M1315 707.5h2M1315 716.5h4" stroke="#bcbcbe" />
                    <text x="1374" y="702" textAnchor="end">100,000K</text>
                    <text x="1374" y="716" textAnchor="end">0K</text>
                  </svg>
                  <AxisTools>
                    <MiniButton $dark>L</MiniButton>
                    <MiniButton $dark>I</MiniButton>
                    <Push />
                    <MiniButton $dark aria-label="maximize volume"><Icon name="square" size={7} /></MiniButton>
                    <MiniButton $dark aria-label="close volume"><Icon name="x" size={7} /></MiniButton>
                  </AxisTools>
                </Axis>
              </ChartRow>
              <DateRow>
                <Dates>
                  <span>2020/12</span>
                  <span>2022/01</span>
                  <span>2023/01</span>
                  <span>2024/01</span>
                </Dates>
                <DateCorner>04/15</DateCorner>
              </DateRow>
              <ControlRow>
                <ScrollTrack>
                  <ScrollPiece $w={17} aria-label="scroll left"><Icon name="left" size={12} /></ScrollPiece>
                  <Push />
                  <ScrollPiece $w={49} aria-label="scroll position" />
                  <ScrollPiece $w={17} aria-label="scroll right"><Icon name="right" size={12} /></ScrollPiece>
                </ScrollTrack>
                <ControlTools>
                  {['first', 'pause', 'last'].map(name => (
                    <ControlButton key={name} aria-label={name}><Icon name={name} size={14} /></ControlButton>
                  ))}
                  <ZoomSlider type="range" defaultValue="4" aria-label="zoom" />
                  {viewTools.map(name => (
                    <ControlButton key={name} $on={name === 'tableGrid' || name === 'cross'} aria-label={name}>
                      <Icon name={name} size={name === 'gear' ? 14 : 15} />
                    </ControlButton>
                  ))}
                </ControlTools>
              </ControlRow>
            </ChartPanel>
            <ToolStrip>
              <StripButton aria-label="refresh"><Icon name="refresh" /></StripButton>
              <StripButton aria-label="options"><Icon name="gear" size={14} /></StripButton>
              <StripRule />
              {stripTools.map(name => (
                <StripButton key={name} $on={name === tool} aria-label={name} onClick={() => this.setState({ tool: name })}>
                  <Icon name={name} />
                </StripButton>
              ))}
            </ToolStrip>
          </Main>
        </Frame>
      </Screen>
    );
  }
}

export default App;
